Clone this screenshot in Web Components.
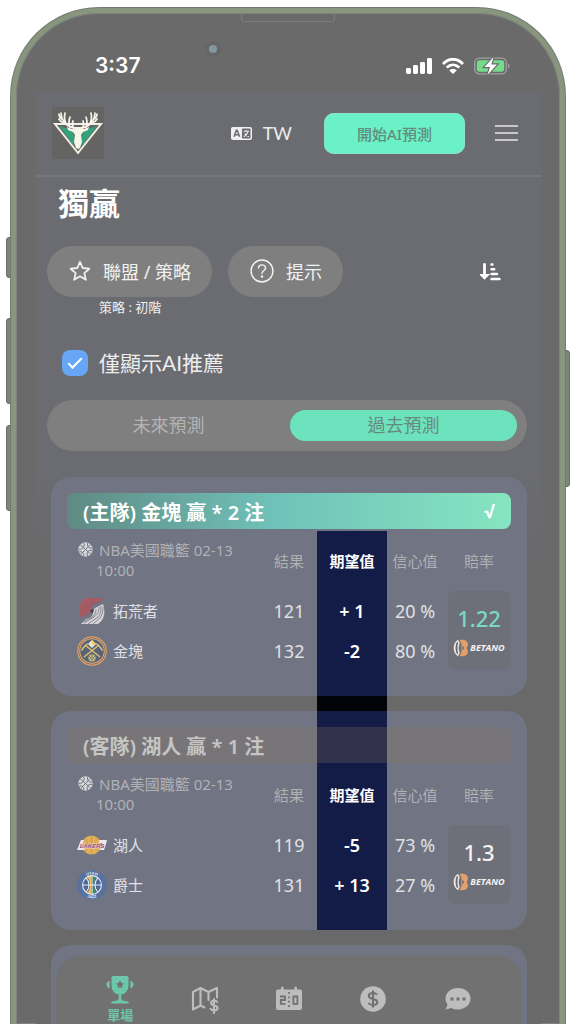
<!DOCTYPE html>
<html lang="zh-Hant">
<head>
<meta charset="utf-8">
<meta name="viewport" content="width=device-width, initial-scale=1">
<title>獨贏</title>
<style>
    html, body { height: 100%; }
    body {
        margin: 0;
        padding: 8px 11px 0;
        box-sizing: border-box;
        overflow: hidden;
        background: #fff;
        font-family: "Noto Sans", "Noto Sans CJK TC", sans-serif;
        font-size: 15px;
        color: #e3e4e6;
        --mint: #6de3bd;
        --pill: #7f7f7f;
        --card: #717482;
        --navy: #131b47;
    }
</style>
</head>
<body>
<phone-frame>
    <status-bar slot="status" time="3:37"></status-bar>
    <app-header lang-code="TW">開始AI預測</app-header>
    <main-panel heading="獨贏">
        <pill-button slot="tools" icon="star">聯盟 / 策略</pill-button>
        <pill-button slot="tools" icon="help">提示</pill-button>
        <span slot="caption">策略 : 初階</span>
        <check-option slot="filter">僅顯示AI推薦</check-option>
        <period-tabs slot="filter" tabs="未來預測|過去預測" selected="1"></period-tabs>
        <match-card result="won" home="拓荒者|blazers|121|+ 1|20 %" away="金塊|nuggets|132|-2|80 %" odds="1.22">(主隊) 金塊 贏 * 2 注</match-card>
        <match-card result="lost" home="湖人|lakers|119|-5|73 %" away="爵士|jazz|131|+ 13|27 %" odds="1.3">(客隊) 湖人 贏 * 1 注</match-card>
        <match-card></match-card>
    </main-panel>
    <bottom-nav slot="nav"></bottom-nav>
</phone-frame>

<script>
const ICONS = {
    logo: `<svg width="52" height="52" viewBox="0 0 52 52"><rect width="52" height="52" fill="#646462"/>
        <path d="M3 17H49L26 46Z" fill="none" stroke="#f2f0e4" stroke-width="2"/>
        <path d="M7 19 20 23 23 30 22 39ZM45 19 32 23 29 30 30 39Z" fill="#35a07c"/>
        <path d="M20 22 15 20 16 23 21 25 23 28 22 35 24 41 26 42 28 41 30 35 29 28 31 25 36 23 37 20 32 22 29 20H23Z" fill="#f7f5ea"/>
        <path d="M24 21C19 21 10 18 9 6M10 12C7 10 7 8 7 7M12 16C9 15 8 14 7 12M15 18C12 14 12 10 13 6M18 20C16 16 17 13 18 10M21 20C20 18 20 16 21 14M28 21C33 21 42 18 43 6M42 12C45 10 45 8 45 7M40 16C43 15 44 14 45 12M37 18C40 14 40 10 39 6M34 20C36 16 35 13 34 10M31 20C32 18 32 16 31 14" fill="none" stroke="#f7f5ea" stroke-width="1.7" stroke-linecap="round"/></svg>`,
    signal: `<svg width="26" height="16" viewBox="0 0 26 16" fill="#fff"><rect y="10" width="5" height="6" rx="1.4"/><rect x="7" y="7" width="5" height="9" rx="1.4"/><rect x="14" y="4" width="5" height="12" rx="1.4"/><rect x="21" width="5" height="16" rx="1.4"/></svg>`,
    wifi: `<svg width="22" height="16" viewBox="0 0 22 16" fill="none" stroke="#fff" stroke-width="2.8"><path d="M1 6C7-.3 15-.3 21 6M4.7 9.6C8.5 6 13.5 6 17.3 9.6"/><path d="M11 16 7.3 12.4C9.4 10.6 12.6 10.6 14.7 12.4Z" fill="#fff" stroke="none"/></svg>`,
    battery: `<svg width="36" height="18" viewBox="0 0 36 18"><rect x=".7" y="1.2" width="31.6" height="15.6" rx="4.6" fill="none" stroke="#a1a1a1" stroke-width="1.3"/><rect x="2.8" y="3.2" width="27.4" height="11.6" rx="2.7" fill="#75dc8d"/><path d="M34 6.6C36 7.4 36 10.6 34 11.4Z" fill="#a1a1a1"/><path d="M19.5 0 10.5 10H16L13.5 18 23 7.5H17.3Z" fill="#fff" stroke="#6b6b6b" stroke-width="2.4" paint-order="stroke"/></svg>`,
    language: `<svg width="21" height="13" viewBox="0 0 21 13"><rect width="21" height="13" rx="2" fill="#f0f0f1"/><rect x="11" y="1.5" width="8.5" height="10" rx=".8" fill="#6b6c71"/><path d="M3 9.7 5.4 3.2H6.2L8.6 9.7M4 7.7H7.6" fill="none" stroke="#6b6c71" stroke-width="1.5"/><path d="M12.5 4.2H18M15.2 3V4.2M17 4.6C16.3 7.5 14.8 8.8 12.8 9.8M13.8 6.2C14.8 8 16.2 9 17.9 9.7" fill="none" stroke="#f0f0f1" stroke-width="1.1"/></svg>`,
    menu: `<svg width="23" height="16" viewBox="0 0 23 16" stroke="#c8c8ca" stroke-width="1.8"><path d="M0 1H23M0 8H23M0 15H23"/></svg>`,
    star: `<svg width="22" height="22" viewBox="0 0 22 22" fill="none" stroke="#f2f2f2" stroke-width="1.8" stroke-linejoin="round"><path d="M11 1.8 13.7 8 20.3 8.7 15.3 13.1 16.8 19.8 11 16.3 5.2 19.8 6.7 13.1 1.7 8.7 8.3 8Z"/></svg>`,
    help: `<svg width="24" height="24" viewBox="0 0 25 25" fill="none" stroke="#f2f2f2" stroke-width="1.5" stroke-linecap="round"><circle cx="12.5" cy="12.5" r="11.4"/><path d="M8.8 9.5C8.8 4.8 16.4 5.2 16.2 9.5C16.1 12 12.5 12 12.5 15"/><circle cx="12.5" cy="18.3" r=".6" fill="#f2f2f2"/></svg>`,
    sort: `<svg width="21" height="18" viewBox="0 0 21 18" fill="none" stroke="#fff" stroke-linecap="round"><path d="M4.5 1.5V14" stroke-width="2.8"/><path d="M1.3 12 4.5 15.3 7.7 12Z" fill="#fff" stroke-width="2"/><path d="M11.5 1.5H12.5M11.5 6.2H14.3M11.5 11H17M11.5 16H19.5" stroke-width="2.4"/></svg>`,
    ball: `<svg width="15" height="15" viewBox="0 0 15 15"><circle cx="7.5" cy="7.5" r="7.2" fill="#d6d7da"/><path d="M2.2 2.8 12.8 12.2M12.4 2.4 2.6 12.6M5.4.6C7.4 3.6 5.4 7.6.6 7.4M9.8.8C8.6 4 10.8 6.6 14.4 6M14.4 8.4C10.4 7.6 8 10.6 9.6 14.4M.8 10C4 9 6.4 11 5.6 14.4" fill="none" stroke="#717482" stroke-width="1"/></svg>`,
    blazers: `<svg width="30" height="30" viewBox="0 0 30 30"><path d="M9 2H26L21 7C17 7 14 10 14 14L13 17 4 22C1 12 3 6 9 2Z" fill="#ad5960"/><path d="M21 28H4L9 23C14 22 17 19 16 15L18 12 26 8C29 17 27 24 21 28Z" fill="#d5d5d7"/><path d="M23 3 12 9C8 12 7 15 7 20M20 2 9 8C6 11 4 14 5 20M24 5 15 9C11 11 10 15 10 18" fill="none" stroke="#85606c" stroke-width=".8"/><path d="M7 27 17 21C21 18 22 15 22 11M11 28 21 21C24 18 24 14 24 10M6 26 15 21C18 19 19 16 19 13M16 28 23 22C26 18 26 14 26 11" fill="none" stroke="#70727d" stroke-width=".8"/><circle cx="15" cy="15" r="1.7" fill="#41434a"/></svg>`,
    nuggets: `<svg width="30" height="30" viewBox="0 0 30 30"><circle cx="15" cy="15" r="14.8" fill="#d3a86c"/><circle cx="15" cy="15" r="13.6" fill="#94515d"/><circle cx="15" cy="15" r="12.8" fill="#d8b477"/><circle cx="15" cy="15" r="11.8" fill="#5a6478"/><path d="M7 21 22 9M23 21 8 9" stroke="#dcc06b" stroke-width="1.5"/><path d="M4.5 15C5 12 7 9.5 11 7.5C8.5 10 6.5 12 4.5 15M25.5 15C25 12 23 9.5 19 7.5C21.5 10 23.5 12 25.5 15" fill="#e2ca77" stroke="#e2ca77" stroke-width=".7"/><path d="M15 4 19 8 15 12 11 8Z" fill="#e9e7dc"/><path d="M15 4 19 8 15 9Z" fill="#efcd5c"/><circle cx="15" cy="22" r="3.6" fill="#d8c981"/><path d="M15 18.5V25.5M12 20C14 21 14 23 12 24M18 20C16 21 16 23 18 24" stroke="#62706c" fill="none"/></svg>`,
    lakers: `<svg width="30" height="30" viewBox="0 0 30 30"><circle cx="14.5" cy="15" r="9.5" fill="#e2ae57"/><path d="M14.5 5.5V24.5M8 8C12 12 12 18 8 22M21 8C17 12 17 18 21 22" fill="none" stroke="#c98f50" stroke-width=".7"/><path d="M4 10H7L4 18H8L7 20H0ZM22 10H30L29 14 27 20H22L25 17V13H22Z" fill="#eee7f1"/><text x="15" y="18" text-anchor="middle" font-family="Liberation Sans, sans-serif" font-size="6" font-weight="700" font-style="italic" fill="#8a4e8c" stroke="#f3dfc6" stroke-width=".8" paint-order="stroke">LAKERS</text></svg>`,
    jazz: `<svg width="30" height="30" viewBox="0 0 30 30"><circle cx="15" cy="15" r="14.8" fill="#5672a1"/><circle cx="15" cy="15" r="9.4" fill="#4d6797"/><path d="M10 6.8C14 11 14 19 10 23.2L14 24.4V5.6Z" fill="#efb95d"/><path d="M15 5.6 19 6.7C16.5 12 16.5 18 19 23.3L15 24.4Z" fill="#3e8b68"/><circle cx="15" cy="15" r="9.4" fill="none" stroke="#e6ebf0" stroke-width="1.1"/><path d="M15 5.5V24.5M5.5 15H24.5M9 7.7C13 12 13 18 9 22.3M21 7.7C17 12 17 18 21 22.3" fill="none" stroke="#e6ebf0" stroke-width="1.1"/><path id="up" d="M4.5 15A10.5 10.5 0 0 1 25.5 15" fill="none"/><path id="down" d="M1.8 15A13.2 13.2 0 0 0 28.2 15" fill="none"/><g font-family="Liberation Sans, sans-serif" font-size="4" font-weight="700" fill="#e6ebf0" text-anchor="middle"><text><textPath href="#up" startOffset="50%">UTAH</textPath></text><text><textPath href="#down" startOffset="50%">JAZZ</textPath></text></g></svg>`,
    betano: `<svg width="16" height="18" viewBox="0 0 16 18"><path d="M6.5.8H9.5C13.6.8 15.8 4 14.6 7.4L13.6 9 14.6 11C15.6 14.6 13.4 17.2 9.5 17.2H6.5L8.4 13.6V4.4Z" fill="#e4a06a"/><path d="M5 .8 6.8 4C5.4 7 5.4 11 6.8 14L5 17.3C-.8 14-.8 4 5 .8Z" fill="#e9e5df"/><path d="M4.4 3.4C2.6 6 2.6 12 4.4 14.6C3.8 11 3.8 7 4.4 3.4Z" fill="#666872" stroke="#666872"/><path d="M9.4 6.4 11.2 9 9.4 11.8Z" fill="#666872"/></svg>`,
    trophy: `<svg width="28" height="28" viewBox="0 0 28 28" fill="#6cc7aa"><path fill-rule="evenodd" d="M5.5 1.5Q5.5 0 7 0H21Q22.5 0 22.5 1.5V9C22.5 15 19 18 15.2 18.6V22.5C16 25 19 25 22 25.5Q23 26 22.7 27.5H5.3Q5 26 6 25.5C9 25 12 25 12.8 22.5V18.6C9 18 5.5 15 5.5 9ZM14 4.2 12.7 7 9.7 7.4 12 9.5 11.4 12.5 14 11 16.6 12.5 16 9.5 18.3 7.4 15.3 7Z"/><path d="M3.6 4.8V12.4C-.7 10.5-.7 6.2 3.6 4.8M24.4 4.8V12.4C28.7 10.5 28.7 6.2 24.4 4.8"/></svg>`,
    map: `<svg width="28" height="28" viewBox="0 0 28 28" fill="none" stroke="#bdbdbd" stroke-width="2.1" stroke-linejoin="round" stroke-linecap="round"><path d="M13.5 21.5 9.5 19.5 2 23.5V6L9.5 2 17.5 6 26 2V11.5M9.5 2V19.5M17.5 6V14"/><path d="M26 15.8C24 14 20 14.5 20 17C20 20 26.5 18.5 26.5 22C26.5 25 21.5 25 19.7 22.8M23 13V27"/></svg>`,
    score: `<svg width="28" height="26" viewBox="0 0 28 26"><path d="M3 3.5H6V1.2Q7.3 0 8.6 1.2V3.5H19.4V1.2Q20.7 0 22 1.2V3.5H25Q27 3.5 27 5.5V22Q27 24 25 24H3Q1 24 1 22V5.5Q1 3.5 3 3.5Z" fill="#bdbdbd"/><path d="M14 6V22" stroke="#717171" stroke-width="1.8" stroke-dasharray="1.8 2.6"/><path d="M5 10.5H10V14H5.8V17.8H10.4M18.4 10.5H22.4V17.8H18.4Z" fill="none" stroke="#717171" stroke-width="1.8"/></svg>`,
    dollar: `<svg width="28" height="28" viewBox="0 0 28 28"><circle cx="14" cy="13" r="12.8" fill="#bdbdbd"/><path d="M18 8.8C16 6.2 9.8 6.4 9.8 10C9.8 14 18.3 12 18.3 16C18.3 19.8 11.5 19.8 9.4 17M14 4.5V21.5" fill="none" stroke="#717171" stroke-width="2"/></svg>`,
    chat: `<svg width="28" height="26" viewBox="0 0 28 26"><path d="M14 2C21 2 26.5 6.5 26.5 12.6S21 23.5 14 23.5C11.5 23.5 9.3 23 7.4 22L1.5 23.5 3.6 18.7C2.2 17 1.5 15 1.5 12.6C1.5 6.5 7 2 14 2Z" fill="#bdbdbd"/><path d="M6.5 11.5H9.5V14.5H6.5ZM12.5 11.5H15.5V14.5H12.5ZM18.5 11.5H21.5V14.5H18.5Z" fill="#717171"/></svg>`
};

class BaseElement extends HTMLElement {
    constructor() {
        super();
        this.attachShadow({mode: 'open'});
    }

    connectedCallback() {
        this.shadowRoot.innerHTML = `<style>
            *, *::before, *::after { box-sizing: border-box; }
            button { font: inherit; color: inherit; border: 0; padding: 0; background: none; cursor: pointer; }
        </style>` + this.render();
    }
}

class AppIcon extends BaseElement {
    render() {
        return `<style>:host, svg { display: block; flex: none; }</style>${ICONS[this.getAttribute('name')]}`;
    }
}

class PhoneFrame extends BaseElement {
    render() {
        return `
        <style>
            :host { display: block; position: relative; height: 100%; }
            .body {
                position: relative;
                height: 100%;
                padding: 0 19px 0 20px;
                border: 5px solid #88957f;
                border-bottom: 0;
                border-radius: 88px 88px 0 0;
                background: #6a6a6a;
                box-shadow: inset 0 0 0 1px #7f827d, 0 0 0 1px #747a72;
                overflow: hidden;
            }
            .screen {
                display: flex;
                flex-direction: column;
                background: linear-gradient(#6b6c71 0 35%, #69696a 46%);
            }
            .key { position: absolute; width: 5px; background: #7d8578; border: 1px solid #69706a; }
            .key.left { left: -5px; border-radius: 3px 0 0 3px; }
            .key.right { right: -5px; border-radius: 0 3px 3px 0; }
            .mute { top: 229px; height: 41px; }
            .up { top: 310px; height: 86px; }
            .down { top: 417px; height: 86px; }
            .power { top: 342px; height: 137px; }
            .speaker {
                position: absolute;
                top: 0;
                left: calc(50% - 47px);
                width: 94px;
                height: 9px;
                border: 1px solid #7c7c7c;
                border-top: 0;
                border-radius: 0 0 4px 4px;
            }
            .camera {
                position: absolute;
                top: 32px;
                left: 193px;
                width: 8px;
                height: 8px;
                border-radius: 50%;
                background: #8497a0;
                box-shadow: 0 0 0 4px #666;
            }
        </style>
        <div class="key left mute"></div>
        <div class="key left up"></div>
        <div class="key left down"></div>
        <div class="key right power"></div>
        <div class="body">
            <div class="speaker"></div>
            <div class="camera"></div>
            <slot name="status"></slot>
            <div class="screen"><slot></slot></div>
            <slot name="nav"></slot>
        </div>`;
    }
}

class StatusBar extends BaseElement {
    render() {
        return `
        <style>
            :host {
                display: flex;
                align-items: center;
                gap: 10px;
                height: 80px;
                padding: 26px 31px 0 59px;
                box-sizing: border-box;
                color: #fff;
                font: 600 21px/26px Inter, sans-serif;
            }
            .time { flex: 1; }
        </style>
        <span class="time">${this.getAttribute('time')}</span>
        <app-icon name="signal"></app-icon>
        <app-icon name="wifi"></app-icon>
        <app-icon name="battery"></app-icon>`;
    }
}

class AppHeader extends BaseElement {
    render() {
        return `
        <style>
            :host {
                display: flex;
                align-items: center;
                height: 84px;
                padding: 0 23px 2px 16px;
                box-sizing: border-box;
                border-bottom: 2px solid #77787c;
            }
            .lang {
                display: flex;
                align-items: center;
                gap: 11px;
                margin: 0 32px 0 auto;
                font: 18px/24px Lato, sans-serif;
                color: #ededee;
            }
            .cta {
                width: 141px;
                height: 41px;
                margin-right: 30px;
                border-radius: 10px;
                background: #6af1c5;
                box-shadow: inset 0 0 0 1px #8be3c7;
                color: #648b7e;
                font-size: 15px;
                font-weight: 500;
            }
        </style>
        <app-icon name="logo"></app-icon>
        <button class="lang"><app-icon name="language"></app-icon>${this.getAttribute('lang-code')}</button>
        <button class="cta"><slot></slot></button>
        <button aria-label="選單"><app-icon name="menu"></app-icon></button>`;
    }
}

class MainPanel extends BaseElement {
    render() {
        return `
        <style>
            :host { display: block; padding: 8px 14px 0 11px; }
            h1 { margin: 0 0 24px 11px; font-size: 31px; line-height: 37px; font-weight: 700; color: #fff; }
            .tools { display: flex; align-items: center; gap: 16px; }
            .sort { margin: 0 26px 0 auto; }
            .caption { margin: 1px 0 33px 52px; font-size: 13px; line-height: 18px; color: #f0f0f0; }
            .cards { display: grid; gap: 15px; margin: 26px 0 0 4px; }
        </style>
        <h1>${this.getAttribute('heading')}</h1>
        <div class="tools">
            <slot name="tools"></slot>
            <button class="sort" aria-label="排序"><app-icon name="sort"></app-icon></button>
        </div>
        <div class="caption"><slot name="caption"></slot></div>
        <slot name="filter"></slot>
        <div class="cards"><slot></slot></div>`;
    }
}

class PillButton extends BaseElement {
    render() {
        return `
        <style>
            :host { display: block; }
            button {
                display: flex;
                align-items: center;
                gap: 12px;
                height: 51px;
                padding: 0 21px 2px 22px;
                border-radius: 26px;
                background: var(--pill);
                color: #f2f2f2;
                font-size: 18px;
            }
        </style>
        <button><app-icon name="${this.getAttribute('icon')}"></app-icon><span><slot></slot></span></button>`;
    }
}

class CheckOption extends BaseElement {
    render() {
        return `
        <style>
            :host { display: block; padding: 0 15px; }
            label {
                display: flex;
                align-items: center;
                gap: 11px;
                font: 21px/28px Lato, "Noto Sans CJK TC", sans-serif;
                color: #ededee;
            }
            input {
                appearance: none;
                display: grid;
                place-items: center;
                width: 26px;
                height: 26px;
                margin: 0;
                border-radius: 8px;
                background: #797f87;
            }
            input:checked { background: #66a6f4; }
            input:checked::after {
                content: "";
                width: 14px;
                height: 7px;
                margin-bottom: 4px;
                border: solid #fff;
                border-width: 0 0 2px 2px;
                transform: rotate(-45deg);
            }
        </style>
        <label for="only"><input type="checkbox" id="only" checked><span><slot></slot></span></label>`;
    }
}

class PeriodTabs extends BaseElement {
    render() {
        const selected = Number(this.getAttribute('selected'));
        const tabs = this.getAttribute('tabs').split('|');
        return `
        <style>
            :host { display: block; margin-top: 23px; }
            .bar { display: flex; gap: 8px; padding: 10px 10px 10px 8px; border-radius: 26px; background: var(--pill); }
            button { flex: 1; height: 31px; border-radius: 16px; font-size: 18px; line-height: 31px; color: #b3b3b3; }
            button[aria-selected="true"] { background: var(--mint); color: #67897d; }
        </style>
        <div class="bar" role="tablist">
            ${tabs.map((tab, i) => `<button role="tab" aria-selected="${i === selected}">${tab}</button>`).join('')}
        </div>`;
    }

    connectedCallback() {
        super.connectedCallback();
        const buttons = this.shadowRoot.querySelectorAll('button');
        buttons.forEach(button => button.addEventListener('click', () => {
            buttons.forEach(b => b.setAttribute('aria-selected', b === button));
        }));
    }
}

class MatchCard extends BaseElement {
    row(attr, odds = '') {
        const [team, logo, score, expected, confidence] = this.getAttribute(attr).split('|');
        return `<tr>
            <th class="team" scope="row"><app-icon name="${logo}"></app-icon>${team}</th>
            <td>${score}</td><td class="expected">${expected}</td><td>${confidence}</td>${odds}
        </tr>`;
    }

    table() {
        const won = this.getAttribute('result') === 'won';
        const odds = `<td class="odds" rowspan="2"><span class="price">${this.getAttribute('odds')}</span>
            <span class="brand"><app-icon name="betano"></app-icon>BETANO</span></td>`;
        return `
        <div class="focus"></div>
        <div class="pick"><slot></slot>${won ? '<span class="tick">√</span>' : ''}</div>
        <table>
            <thead><tr>
                <th class="league"><app-icon name="ball"></app-icon><span>NBA美國職籃 02-13<br>10:00</span></th>
                <th>結果</th><th class="expected">期望值</th><th>信心值</th><th class="rate">賠率</th>
            </tr></thead>
            <tbody>${this.row('home', odds)}${this.row('away')}</tbody>
        </table>`;
    }

    render() {
        return `
        <style>
            :host {
                display: grid;
                grid-template-columns: 1fr 56px 70px 56px 68px;
                grid-template-rows: 16px 36px 2px auto 25px;
                min-height: 219px;
                padding: 0 16px;
                box-sizing: border-box;
                border-radius: 20px;
                background: var(--card);
            }
            .focus { grid-column: 3; grid-row: 1 / -1; background: var(--navy); }
            /* the highlighted column runs on through the gap to the next card */
            :host([result="won"]) .focus { grid-row: 4 / -1; margin-bottom: -15px; border-bottom: 15px solid #020308; }
            .pick {
                grid-column: 1 / -1;
                grid-row: 2;
                display: flex;
                align-items: center;
                justify-content: space-between;
                padding: 0 16px;
                border-radius: 8px;
                background: rgba(145, 120, 95, .25);
                color: #c5c5c3;
                font-size: 20px;
                font-weight: 600;
            }
            .tick { font-family: Roboto, sans-serif; }
            :host([result="won"]) .pick { background: linear-gradient(90deg, #5f8a83, #6fc0b8 45%, #86e5c1); color: #fff; }
            table {
                display: grid;
                grid-template-columns: subgrid;
                grid-template-rows: 60px 40px 40px;
                grid-column: 1 / -1;
                grid-row: 4;
            }
            thead, tbody, tr { display: contents; }
            th, td { display: flex; align-items: center; justify-content: center; padding: 0; white-space: nowrap; }
            th { font-size: 15px; line-height: 20px; font-weight: 400; color: #b0b1b5; }
            td { font-size: 18px; line-height: 24px; color: #e0e1e6; }
            th.league { align-items: flex-start; justify-content: flex-start; gap: 3px; padding: 9px 0 0 11px; }
            .league app-icon { padding-top: 2px; }
            .league > span { text-align: left; text-indent: 3px; }
            th.team { justify-content: flex-start; gap: 6px; padding-left: 10px; color: #e0e1e6; }
            .rate { padding-left: 4px; }
            .expected { color: #fff; font-weight: 600; }
            .odds {
                grid-column: 5;
                grid-row: 2 / 4;
                flex-direction: column;
                gap: 8px;
                margin: 0 1px 1px 5px;
                border-radius: 6px;
                background: #6e7079;
            }
            .price { font-size: 22px; line-height: 26px; color: #f3f3f3; font-weight: 500; }
            :host([result="won"]) .price { color: #79d9c4; }
            .brand { display: flex; align-items: center; gap: 1px; font: italic 700 9px/18px "Open Sans", sans-serif; color: #f3f3f3; }
        </style>
        ${this.hasAttribute('home') ? this.table() : ''}`;
    }
}

class BottomNav extends BaseElement {
    render() {
        const items = [['map', '地圖'], ['score', '比分'], ['dollar', '獎金'], ['chat', '聊天']];
        return `
        <style>
            /* floats over the scrolling list */
            :host { position: absolute; bottom: 0; left: 40px; right: 38px; }
            nav {
                display: grid;
                grid-template-columns: repeat(5, 1fr);
                height: 68px;
                padding: 0 22px;
                border-radius: 24px 24px 0 0;
                background: #717171;
            }
            a { display: grid; justify-items: center; align-content: start; padding-top: 30px; text-decoration: none; }
            a.active { padding-top: 20px; gap: 3px; color: #6cc7aa; font-size: 13px; line-height: 16px; font-weight: 700; }
        </style>
        <nav>
            <a class="active" href="#single"><app-icon name="trophy"></app-icon>單場</a>
            ${items.map(([name, label]) => `<a href="#${name}" aria-label="${label}"><app-icon name="${name}"></app-icon></a>`).join('')}
        </nav>`;
    }
}

customElements.define('app-icon', AppIcon);
customElements.define('phone-frame', PhoneFrame);
customElements.define('status-bar', StatusBar);
customElements.define('app-header', AppHeader);
customElements.define('main-panel', MainPanel);
customElements.define('pill-button', PillButton);
customElements.define('check-option', CheckOption);
customElements.define('period-tabs', PeriodTabs);
customElements.define('match-card', MatchCard);
customElements.define('bottom-nav', BottomNav);
</script>
</body>
</html>
